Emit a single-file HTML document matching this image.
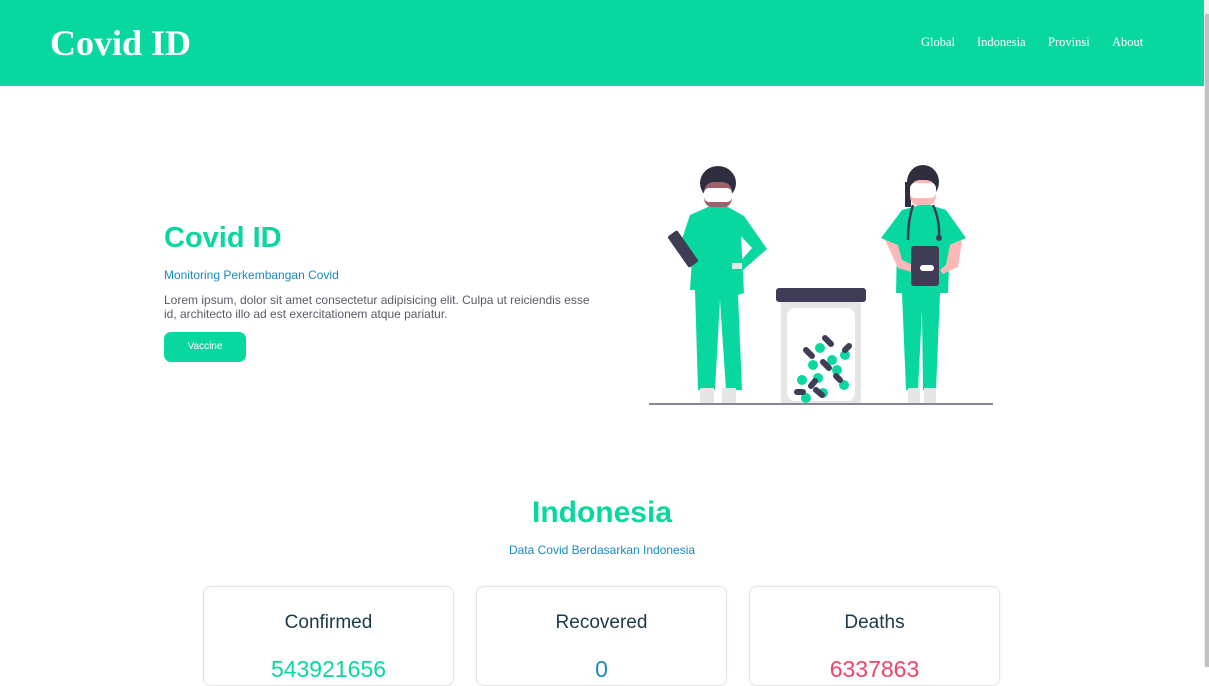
<!DOCTYPE html>
<html><head><meta charset="utf-8"><style>
*{margin:0;padding:0;box-sizing:border-box}
body{width:1209px;height:667px;overflow:hidden;background:#fff;font-family:"Liberation Sans",sans-serif;position:relative}
.hdr{position:absolute;left:0;top:0;width:1204px;height:86px;background:#08d8a0}
.logo{position:absolute;left:50px;top:22px;font:bold 36px "Liberation Serif",serif;color:#fff}
.nav{position:absolute;top:35px;font:12.5px "Liberation Serif",serif;color:#fff}
.sb{position:absolute;left:1204px;top:0;width:5px;height:667px;background:#f1f1f1}
.sb i{position:absolute;left:1px;top:14px;width:4px;height:653px;background:#c1c1c1}
h1{position:absolute;left:164px;top:222px;font-size:29px;font-weight:bold;color:#08d8a0}
.sub{position:absolute;left:164px;top:268px;font-size:12px;color:#1a8ac4}
.p{position:absolute;left:164px;top:293px;width:440px;font-size:12px;line-height:14px;color:#5a5a6a}
.btn{position:absolute;left:164px;top:332px;width:82px;height:30px;border-radius:7px;background:#08d8a0;color:#fff;font:10px "Liberation Sans",sans-serif;text-align:center;line-height:30px}
h2{position:absolute;left:0;width:1204px;text-align:center;top:496px;font-size:30px;font-weight:bold;color:#08d8a0}
.s2{position:absolute;left:0;width:1204px;text-align:center;top:543px;font-size:12px;color:#1a8ac4}
.card{position:absolute;top:586px;width:251px;height:100px;border:1px solid #e4e4e4;border-radius:8px;text-align:center;box-shadow:0 0 3px rgba(0,0,0,.06)}
.card b{display:block;font-weight:normal;font-size:19px;color:#1a3a4a;margin-top:25px}
.card span{display:block;font-size:23px;margin-top:22px}
</style></head><body>
<div class="hdr"><div class="logo">Covid ID</div>
<div class="nav" style="left:921px">Global</div>
<div class="nav" style="left:977px">Indonesia</div>
<div class="nav" style="left:1048px">Provinsi</div>
<div class="nav" style="left:1112px">About</div></div>
<div class="sb"><i></i></div>
<h1>Covid ID</h1>
<div class="sub">Monitoring Perkembangan Covid</div>
<div class="p">Lorem ipsum, dolor sit amet consectetur adipisicing elit. Culpa ut reiciendis esse id, architecto illo ad est exercitationem atque pariatur.</div>
<div class="btn">Vaccine</div>
<svg style="position:absolute;left:640px;top:150px" width="370" height="270" viewBox="0 0 370 270">
<ellipse cx="78" cy="33" rx="18" ry="17" fill="#2f2e41"/>
<rect x="64" y="32" width="28" height="26" rx="10" fill="#9e616a"/>
<rect x="64" y="38" width="28" height="14" rx="5" fill="#fff"/>
<path d="M50 65 L68 57 L88 57 L104 66 L127 99 L103 120 L97 115 L112 98 L101 86 L104 143 L98 145 L102 240 L86 240 L80 150 L75 240 L58 240 L55 140 L50 140 L52 108 L45 105 L40 95 Z" fill="#08d8a0"/>
<rect x="37" y="80" width="12" height="38" rx="2" transform="rotate(-35 43 99)" fill="#3f3d56"/>
<rect x="60" y="238" width="14" height="15" fill="#e6e6e6"/><rect x="82" y="238" width="14" height="15" fill="#e6e6e6"/>
<rect x="92" y="113" width="10" height="6" fill="#e6e6e6"/>
<rect x="141" y="152" width="80" height="101" fill="#e6e6e6"/>
<rect x="147" y="158" width="68" height="93" rx="8" fill="#fff"/>
<rect x="136" y="138" width="90" height="14" rx="3" fill="#3f3d56"/>
<g fill="#08d8a0"><circle cx="180" cy="198" r="5"/><circle cx="173" cy="215" r="5"/><circle cx="197" cy="220" r="5"/><circle cx="162" cy="230" r="5"/><circle cx="183" cy="243" r="5"/><circle cx="204" cy="235" r="5"/><circle cx="166" cy="248" r="5"/><circle cx="192" cy="210" r="5"/><circle cx="205" cy="205" r="5"/><circle cx="178" cy="228" r="5"/></g>
<g stroke="#3f3d56" stroke-width="6" stroke-linecap="round"><line x1="166" y1="200" x2="172" y2="206"/><line x1="185" y1="188" x2="191" y2="194"/><line x1="183" y1="212" x2="189" y2="218"/><line x1="196" y1="226" x2="200" y2="230"/><line x1="157" y1="242" x2="163" y2="242"/><line x1="171" y1="236" x2="175" y2="231"/><line x1="205" y1="200" x2="209" y2="196"/><line x1="176" y1="240" x2="182" y2="245"/></g>
<ellipse cx="283" cy="32" rx="16" ry="17" fill="#2f2e41"/>
<rect x="265" y="32" width="6" height="25" fill="#2f2e41"/>
<rect x="270" y="30" width="26" height="26" rx="10" fill="#ffb8b8"/>
<rect x="270" y="33" width="26" height="15" rx="5" fill="#fff"/>
<path d="M262 60 L280 55 L290 55 L306 60 L326 88 L310 95 L308 143 L300 143 L296 240 L283 240 L282 160 L278 240 L266 240 L262 143 L256 143 L257 95 L241 88 Z" fill="#08d8a0"/>
<path d="M245 90 L258 95 L262 110 L284 120 L282 125 L258 118 Z M322 90 L310 95 L306 115 L300 120 L303 124 L318 117 Z" fill="#ffb8b8"/>
<rect x="271" y="96" width="28" height="40" rx="3" fill="#3f3d56"/>
<path d="M273 55 Q268 70 268 90 M293 55 Q300 70 299 88" stroke="#3f3d56" stroke-width="2.5" fill="none"/>
<circle cx="299" cy="88" r="3" fill="#3f3d56"/>
<rect x="280" y="115" width="14" height="6" rx="3" fill="#fff"/>
<rect x="268" y="238" width="12" height="15" fill="#e6e6e6"/><rect x="284" y="238" width="12" height="15" fill="#e6e6e6"/>
<line x1="9" y1="254" x2="353" y2="254" stroke="#3f3d56" stroke-width="1.2"/>
</svg>
<h2>Indonesia</h2>
<div class="s2">Data Covid Berdasarkan Indonesia</div>
<div class="card" style="left:203px"><b>Confirmed</b><span style="color:#08d8a0">543921656</span></div>
<div class="card" style="left:476px"><b>Recovered</b><span style="color:#1a8ac4">0</span></div>
<div class="card" style="left:749px"><b>Deaths</b><span style="color:#f0426a">6337863</span></div>
</body></html>
